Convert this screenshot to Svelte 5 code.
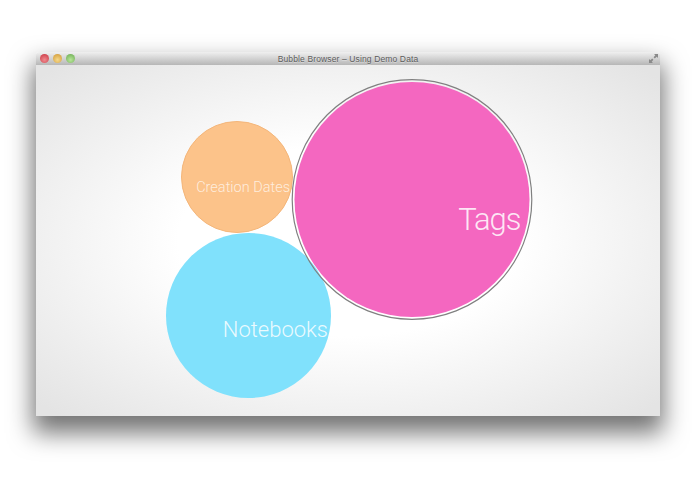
<script>
    const bubbles = [
        { name: 'orange', cx: 201, cy: 112, r: 55.5, fill: '#fcc38a', stroke: '#f4b67a' },
        { name: 'blue', cx: 212.5, cy: 250.5, r: 82.5, fill: '#80e1fc', stroke: 'none' },
        { name: 'pink', cx: 376, cy: 134.5, r: 117.5, fill: '#f467c0', stroke: 'none' }
    ];

    const labels = [
        { text: 'Creation Dates', x: 254, y: 127, size: 14.5, opacity: 0.72, spacing: 0 },
        { text: 'Notebooks', x: 292, y: 272, size: 22, opacity: 0.85, spacing: 0 },
        { text: 'Tags', x: 484.5, y: 165, size: 31, opacity: 0.85, spacing: -1 }
    ];
</script>

<div class="page">
    <div class="window">
        <header class="titlebar">
            <div class="lights">
                <span class="light red"></span>
                <span class="light yellow"></span>
                <span class="light green"></span>
            </div>
            <span class="title">Bubble Browser – Using Demo Data</span>
            <svg class="expand" width="11" height="11" viewBox="0 0 11 11">
                <path d="M6 1h4v4L8.700 3.700 6.800 5.500 5.600 4.300 7.300 2.300zM5 10H1V6l1.300 1.300 1.900-1.800 1.200 1.200-1.700 2z" fill="#8a8a8a" />
            </svg>
        </header>

        <svg class="canvas" width="624" height="351" viewBox="0 0 624 351">
            <defs>
                <radialGradient id="bg" cx="50%" cy="50%" r="68%">
                    <stop offset="0.4" stop-color="#ffffff" />
                    <stop offset="1" stop-color="#e4e4e4" />
                </radialGradient>
            </defs>
            <rect width="624" height="351" fill="url(#bg)" />
            {#each bubbles as b (b.name)}
                <circle cx={b.cx} cy={b.cy} r={b.r} fill={b.fill} stroke={b.stroke} />
            {/each}
            <circle cx="376" cy="134.500" r="119.800" fill="none" stroke="#808080" stroke-width="1.200" />
            {#each labels as l (l.text)}
                <text x={l.x} y={l.y} font-size={l.size} letter-spacing={l.spacing} fill="#fff" fill-opacity={l.opacity} text-anchor="end">{l.text}</text>
            {/each}
        </svg>
    </div>
</div>

<style>
    :global(body) {
        background: #fff;
    }

    .page {
        padding: 52px 35px 78px 36px;
        overflow: hidden;
    }

    .window {
        display: flex;
        flex-direction: column;
        width: 624px;
        height: 364px;
        border-radius: 3px 3px 0 0;
        box-shadow: 0 14px 24px 3px rgba(0, 0, 0, 0.55);
    }

    .titlebar {
        position: relative;
        display: flex;
        align-items: center;
        justify-content: center;
        flex: 0 0 13px;
        background: linear-gradient(#f0f0f0, #b6b6b6);
        border-radius: 3px 3px 0 0;
    }

    .lights {
        position: absolute;
        left: 3.500px;
        top: 1.500px;
        display: flex;
        gap: 4px;
    }

    .light {
        width: 9px;
        height: 9px;
        border-radius: 50%;
    }

    .red {
        background: radial-gradient(circle at 50% 65%, #f08a8f, #c8323e);
    }

    .yellow {
        background: radial-gradient(circle at 50% 65%, #f6d98a, #cf9530);
    }

    .green {
        background: radial-gradient(circle at 50% 65%, #b8e69a, #68a94e);
    }

    .title {
        font-family: "Liberation Sans", sans-serif;
        font-size: 8.5px;
        letter-spacing: 0.13px;
        color: #5c5c5c;
        text-shadow: 0 1px 0 rgba(255, 255, 255, 0.4);
    }

    .expand {
        position: absolute;
        right: 1px;
        top: 1px;
    }

    .canvas {
        display: block;
    }

    .canvas text {
        font-family: Roboto, "Liberation Sans", sans-serif;
        font-weight: 300;
    }
</style>
